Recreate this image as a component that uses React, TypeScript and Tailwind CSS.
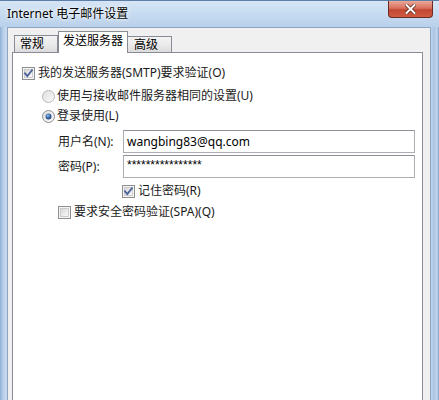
import React from "react";

function CheckBox({ checked }: { checked: boolean }) {
  return (
    <svg width="13" height="13" viewBox="0 0 13 13" className="shrink-0">
      <defs>
        <linearGradient id="cbg" x1="0" y1="0" x2="1" y2="1">
          <stop offset="0" stopColor="#d6d6d6" />
          <stop offset="1" stopColor="#fbfbfb" />
        </linearGradient>
      </defs>
      <rect x="0.5" y="0.5" width="12" height="12" fill="#f4f4f4" stroke="#8e8f8f" />
      <rect x="2.5" y="2.5" width="8" height="8" fill="url(#cbg)" stroke="#c4c4c4" strokeWidth="0.8" />
      {checked && (
        <path d="M3 6.3 L5.3 9 L10 3.2" fill="none" stroke="#4a5f97" strokeWidth="1.8" strokeLinecap="square" />
      )}
    </svg>
  );
}

function Radio({ checked }: { checked: boolean }) {
  return (
    <svg width="13" height="13" viewBox="0 0 13 13" className="shrink-0">
      <defs>
        <linearGradient id="rbg" x1="0" y1="0" x2="1" y2="1">
          <stop offset="0" stopColor="#dedede" />
          <stop offset="1" stopColor="#fcfcfc" />
        </linearGradient>
        <radialGradient id="rdot" cx="0.4" cy="0.35" r="0.7">
          <stop offset="0" stopColor="#9fc2ea" />
          <stop offset="0.5" stopColor="#3c6cad" />
          <stop offset="1" stopColor="#1d3f72" />
        </radialGradient>
      </defs>
      <circle cx="6.5" cy="6.5" r="6" fill="url(#rbg)" stroke={checked ? "#8e8f8f" : "#b9b9b9"} />
      {checked && <circle cx="6.5" cy="6.5" r="3" fill="url(#rdot)" />}
    </svg>
  );
}

export default function App() {
  return (
    <div className="w-[439px] h-[400px] overflow-hidden flex flex-col bg-[linear-gradient(90deg,#8fb0d6_0px,#b8d0ea_3px,#c9dcf1_7px,#c9dcf1_430px,#a9c4e3_434px,#c3d7ee_437px,#7f9fc6_439px)] font-['Noto_Sans','Noto_Sans_CJK_SC',sans-serif] text-[12px] text-[#1b1b1b]">
      {/* title bar */}
      <div className="h-[27px] shrink-0 flex items-start justify-between border-t border-[#5d7ea8] bg-[linear-gradient(180deg,#d6e5f5_0%,#c8dcf1_45%,#b9d0ea_100%)]">
        <div className="pl-[7px] pt-[5px] leading-[16px] text-[12px] text-black [text-shadow:0_0_6px_#ffffff,0_0_3px_#ffffff]">
          Internet 电子邮件设置
        </div>
        <div className="mr-[6px] w-[45px] h-[17px] rounded-b-[4px] border border-t-0 border-[#6b2b22] bg-[linear-gradient(180deg,#e9a898_0%,#d9705e_45%,#c24733_55%,#cf5a42_100%)] flex items-center justify-center">
          <svg width="11" height="10" viewBox="0 0 11 10">
            <path d="M1.5 1 L9.5 9 M9.5 1 L1.5 9" stroke="#5a1d14" strokeWidth="3.4" strokeLinecap="square" />
            <path d="M1.5 1 L9.5 9 M9.5 1 L1.5 9" stroke="#ffffff" strokeWidth="2" strokeLinecap="square" />
          </svg>
        </div>
      </div>

      {/* client area */}
      <div className="flex-1 flex flex-col ml-[7px] mr-[8px] border border-b-0 border-[#8ea6c4] bg-[#f0f0f0]">
        <div className="flex-1 flex flex-col ml-[4px] mr-[7px] mt-[3px]">
          {/* tabs */}
          <div className="h-[22px] shrink-0 flex items-end pl-[2px] relative z-10 -mb-px">
            <div className="w-[44px] h-[17px] mb-[1px] pl-[5px] border border-b-0 border-[#898c95] bg-[linear-gradient(180deg,#f3f3f3_0%,#ebebeb_50%,#dcdcdc_100%)] leading-[15px] text-black">
              常规
            </div>
            <div className="w-[70px] h-[22px] border border-b-0 border-[#898c95] bg-white flex justify-center leading-[18px] text-black">
              发送服务器
            </div>
            <div className="w-[44px] h-[16px] mb-[1px] pl-[6px] border border-b-0 border-l-0 border-[#898c95] bg-[linear-gradient(180deg,#f3f3f3_0%,#ebebeb_50%,#dcdcdc_100%)] leading-[15px] text-black">
              高级
            </div>
          </div>

          {/* panel */}
          <div className="flex-1 border border-b-0 border-[#898c95] bg-white flex flex-col pt-[10px]">
            <div className="h-[20px] flex items-center gap-[3px] pl-[9px]">
              <CheckBox checked />
              <span>我的发送服务器(SMTP)要求验证(O)</span>
            </div>
            <div className="h-[20px] mt-[3px] flex items-center gap-[2px] pl-[29px]">
              <Radio checked={false} />
              <span>使用与接收邮件服务器相同的设置(U)</span>
            </div>
            <div className="h-[20px] flex items-center gap-[2px] pl-[29px]">
              <Radio checked />
              <span>登录使用(L)</span>
            </div>
            <div className="h-[23px] mt-[4px] flex items-center pl-[45px]">
              <span className="w-[65px]">用户名(N):</span>
              <div className="w-[292px] h-[23px] border border-[#abadb3] border-t-[#8e9199] bg-white flex items-center pl-[3px] text-[12px] text-black">
                wangbing83@qq.com
              </div>
            </div>
            <div className="h-[23px] mt-[2px] flex items-center pl-[45px]">
              <span className="w-[65px]">密码(P):</span>
              <div className="w-[292px] h-[23px] border border-[#abadb3] border-t-[#8e9199] bg-white flex items-start pt-[3px] pl-[3px] font-['Liberation_Sans',sans-serif] text-[12px] leading-[12px] text-black">
                ****************
              </div>
            </div>
            <div className="h-[20px] mt-[3px] flex items-center gap-[3px] pl-[109px]">
              <CheckBox checked />
              <span>记住密码(R)</span>
            </div>
            <div className="h-[20px] mt-[1px] flex items-center gap-[3px] pl-[45px]">
              <CheckBox checked={false} />
              <span>要求安全密码验证(SPA)(Q)</span>
            </div>
          </div>
        </div>
      </div>
    </div>
  );
}
